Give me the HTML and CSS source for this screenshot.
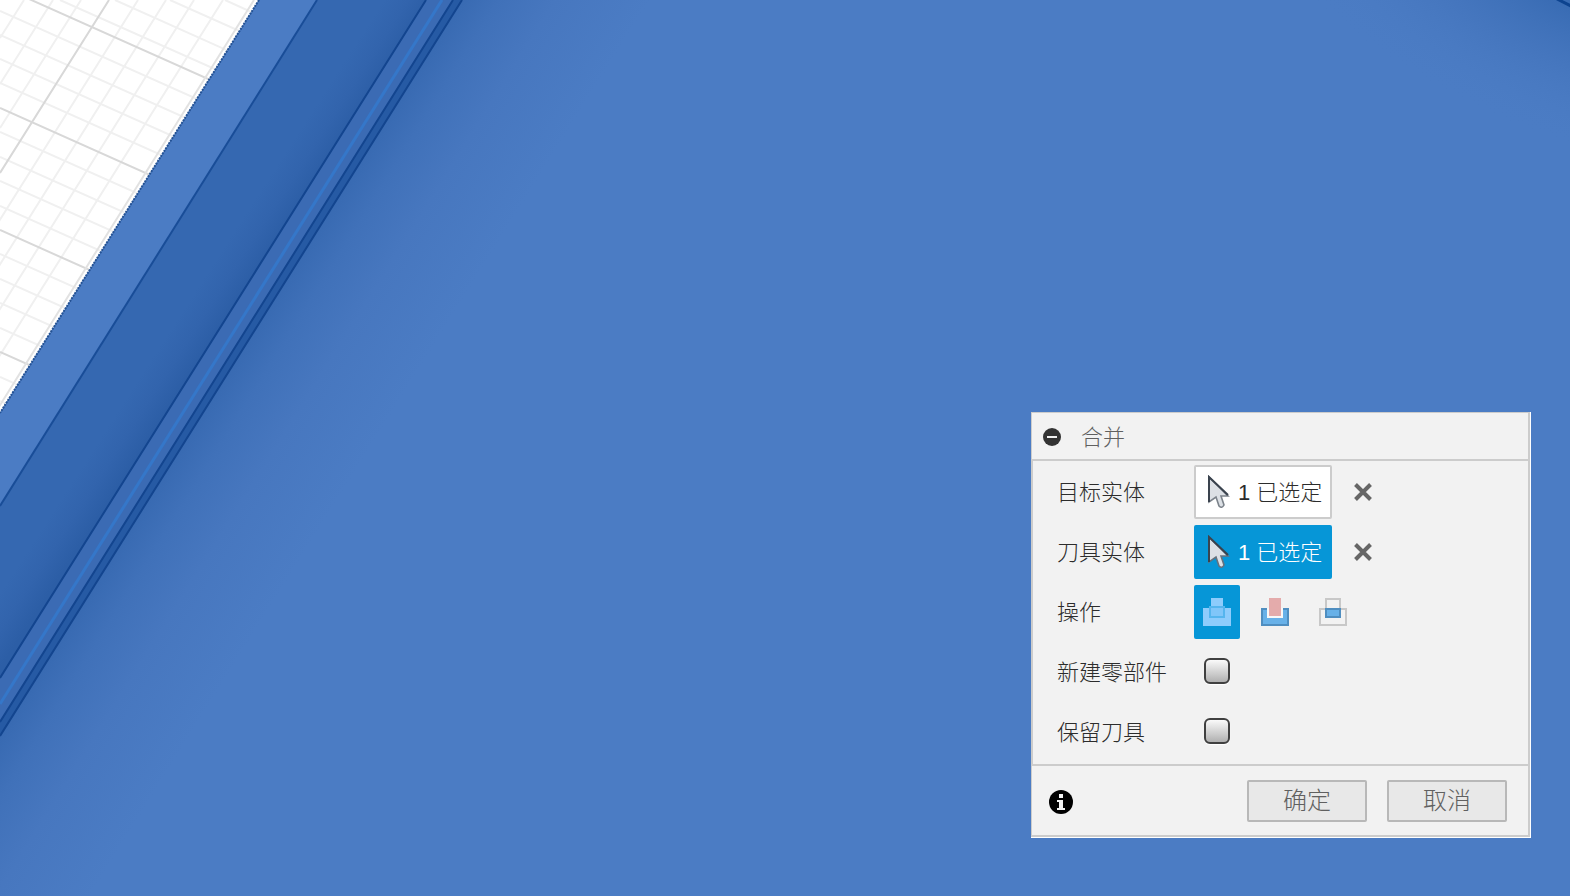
FILE: index.html
```html
<!DOCTYPE html>
<html lang="zh-CN">
<head>
<meta charset="utf-8">
<title>合并</title>
<link rel="stylesheet" href="styles.css">
</head>
<body>
<main class="viewport">
  <svg class="scene" viewBox="0 0 1570 896" preserveAspectRatio="xMinYMin slice" aria-hidden="true">
    <defs>
      <linearGradient id="floor" gradientUnits="userSpaceOnUse" x1="231" y1="368" x2="367" y2="453">
        <stop offset="0" stop-color="#386ab2"/>
        <stop offset=".2" stop-color="#4071b9"/>
        <stop offset=".5" stop-color="#4777bf"/>
        <stop offset="1" stop-color="#4b7cc4"/>
      </linearGradient>
      <linearGradient id="crease" gradientUnits="userSpaceOnUse" x1="179" y1="317" x2="213" y2="339">
        <stop offset="0" stop-color="#3568b1"/>
        <stop offset=".5" stop-color="#3264ad"/>
        <stop offset="1" stop-color="#2c5ea6"/>
      </linearGradient>
      <radialGradient id="corner" gradientUnits="userSpaceOnUse" cx="0" cy="0" r="1" gradientTransform="translate(1580 -10) rotate(22) scale(360 150)">
        <stop offset="0" stop-color="#2d62aa" stop-opacity=".8"/>
        <stop offset=".5" stop-color="#3f70b8" stop-opacity=".5"/>
        <stop offset="1" stop-color="#4b7cc4" stop-opacity="0"/>
      </radialGradient>
      <clipPath id="plane"><path d="M0 0H259L0 413Z"/></clipPath>
    </defs>
    <rect width="1570" height="896" fill="url(#floor)"/>
    <rect x="1100" width="470" height="300" fill="url(#corner)"/>
    <path d="M1557 -1L1571 6" stroke="#0d438f" stroke-width="3"/>
    <path d="M0 0H259L0 413Z" fill="#fff"/>
    <g clip-path="url(#plane)" fill="none">
      <path stroke="#f0f0f0" stroke-width="2" d="M0 11L300 145M0 35L300 169M0 59L300 193M0 83L300 217M0 132L300 266M0 157L300 291M0 181L300 315M0 206L300 340M0 254L300 388M0 279L300 413M0 303L300 437M0 328L300 462M0 377L300 511M0 401L300 535M60 0L300 107M115 0L300 83M170 0L300 58M225 0L300 34"/>
      <path stroke="#f0f0f0" stroke-width="2" d="M24 0L0 38M53 0L0 84M81 0L0 128M138 0L-122 414M166 0L-94 414M194 0L-66 414M223 0L-37 414"/>
      <path stroke="#d8d8d8" stroke-width="2" d="M0 -14L300 120M0 108L300 242M0 230L300 364M0 352L300 486M109 0L0 173"/>
      <path stroke="#e2e2e2" stroke-width="2" d="M254 0L-5 413"/>
    </g>
    <path d="M259 0H317L0 506V413Z" fill="#4b7cc4"/>
    <path d="M317 0H426L0 678V506Z" fill="#3568b1"/>
    <path d="M372 0H426L0 678V592Z" fill="url(#crease)"/>
    <path d="M426 0H453L0 722V678Z" fill="#3b6bb4"/>
    <path d="M453 0H462L0 736V722Z" fill="#265aa4"/>
    <g fill="none" stroke-width="2">
      <path stroke="#245294" stroke-dasharray="2 1" d="M259 0L0 413"/>
      <path stroke="#194d98" d="M317 0L0 506"/>
      <path stroke="#13458f" d="M426 0L0 678M453 0L0 722M462 0L0 736"/>
      <path stroke="#3577c9" stroke-width="3" d="M442 0L0 704"/>
    </g>
  </svg>

  <form class="dialog" aria-labelledby="dialog-title">
    <header class="dialog-header">
      <button class="plain-button" type="button" aria-label="折叠">
        <svg width="18" height="18" viewBox="0 0 18 18"><circle cx="9" cy="9" r="9" fill="#333"/><path d="M4 9H14" stroke="#f1f1f1" stroke-width="2"/></svg>
      </button>
      <h1 class="dialog-title" id="dialog-title">合并</h1>
    </header>

    <div class="dialog-body">
      <div class="row">
        <span class="row-label" id="target-label">目标实体</span>
        <button class="picker" type="button" aria-describedby="target-label">
          <svg class="cursor" width="22" height="34" viewBox="0 0 22 34"><path d="M1 2V27L8 22L11 31Q14 34 16 30L13 21H20Z" fill="#dce0e5" stroke="#7c838b" stroke-width="1.6"/><path d="M1 27V2L20 20" fill="none" stroke="#3a434e" stroke-width="2"/></svg>
          <span>1 已选定</span>
        </button>
        <button class="plain-button clear" type="button" aria-label="清除目标实体">
          <svg width="18" height="18" viewBox="0 0 18 18"><path d="M1.500 1.500L16.500 16.500M16.500 1.500L1.500 16.500" stroke="#666" stroke-width="4"/></svg>
        </button>
      </div>
      <div class="row">
        <span class="row-label" id="tool-label">刀具实体</span>
        <button class="picker picker-active" type="button" aria-describedby="tool-label">
          <svg class="cursor" width="22" height="34" viewBox="0 0 22 34"><path d="M1 2V27L8 22L11 31Q14 34 16 30L13 21H20Z" fill="#dce0e5" stroke="#66717d" stroke-width="1.6"/><path d="M1 27V2L20 20" fill="none" stroke="#3a434e" stroke-width="2"/></svg>
          <span>1 已选定</span>
        </button>
        <button class="plain-button clear" type="button" aria-label="清除刀具实体">
          <svg width="18" height="18" viewBox="0 0 18 18"><path d="M1.500 1.500L16.500 16.500M16.500 1.500L1.500 16.500" stroke="#666" stroke-width="4"/></svg>
        </button>
      </div>
      <div class="row">
        <span class="row-label" id="operation-label">操作</span>
        <div class="operations" role="group" aria-labelledby="operation-label">
          <button class="operation operation-active" type="button" aria-label="合并" aria-pressed="true">
            <svg width="28" height="28" viewBox="0 0 28 28"><path d="M8 0H20V10H28V28H0V10H8Z" fill="#8dccfc"/><rect x="7" y="9" width="14" height="10" fill="#80c6f9" stroke="#55b5ee" stroke-width="2"/></svg>
          </button>
          <button class="operation" type="button" aria-label="剪切" aria-pressed="false">
            <svg width="28" height="28" viewBox="0 0 28 28"><rect x="1" y="11" width="26" height="16" fill="#68b1e8" stroke="#4f8ec0" stroke-width="2"/><path d="M6 10H22V20H6Z" fill="#f8f8f8"/><path d="M8 0H20V18H8Z" fill="#e4abab"/></svg>
          </button>
          <button class="operation" type="button" aria-label="相交" aria-pressed="false">
            <svg width="28" height="28" viewBox="0 0 28 28"><g fill="none" stroke-width="2"><path d="M1 11H27V27H1ZM7 1H21V19H7Z" stroke="#c8c8c8"/><rect x="7" y="11" width="14" height="8" fill="#68b1e8" stroke="#4f8ec0"/></g></svg>
          </button>
        </div>
      </div>
      <div class="row">
        <label class="row-label" for="new-component">新建零部件</label>
        <input class="check" type="checkbox" id="new-component">
      </div>
      <div class="row">
        <label class="row-label" for="keep-tools">保留刀具</label>
        <input class="check" type="checkbox" id="keep-tools">
      </div>
    </div>

    <footer class="dialog-footer">
      <button class="plain-button info" type="button" aria-label="信息">
        <svg width="24" height="24" viewBox="0 0 24 24"><circle cx="12" cy="12" r="12" fill="#000"/><path d="M10 4H14V8H10ZM8 10H14V18H16V20H8V18H10V12H8Z" fill="#f4f4f4"/></svg>
      </button>
      <button class="action" type="submit">确定</button>
      <button class="action" type="button">取消</button>
    </footer>
  </form>
</main>
</body>
</html>
```
FILE: styles.css
```css
* {
  box-sizing: border-box;
}

body {
  margin: 0;
  font-family: "Liberation Sans", "Noto Sans CJK SC", sans-serif;
  font-size: 22px;
  font-weight: 300;
  line-height: 30px;
  color: #2c2c2c;
}

button {
  margin: 0;
  font: inherit;
  cursor: pointer;
}

svg {
  display: block;
}

.viewport {
  position: relative;
  min-height: 100vh;
  overflow: hidden;
  background: #4b7cc4;
}

.scene {
  position: absolute;
  inset: 0;
  width: 100%;
  height: 100%;
}

.dialog {
  position: absolute;
  right: 39px;
  bottom: 58px;
  width: 500px;
  border-right: 1px solid #fff;
  border-bottom: 1px solid #fff;
  background: #f2f2f2;
}

.dialog-header {
  display: flex;
  align-items: center;
  gap: 20px;
  height: 49px;
  padding: 1px 11px 0;
  border: 1px solid #ccc;
  border-width: 1px 2px 2px 1px;
}

.dialog-title {
  margin: 0;
  padding-top: 2px;
  font-size: 22px;
  font-weight: 300;
  color: #606060;
}

.plain-button {
  display: flex;
  padding: 0;
  border: 0;
  background: none;
}

.dialog-body {
  display: flex;
  flex-direction: column;
  gap: 6px;
  padding: 4px 24px 5px;
  border: solid #ccc;
  border-width: 0 2px;
}

.row {
  display: flex;
  align-items: center;
  height: 54px;
}

.row-label {
  width: 137px;
  flex: none;
  padding-top: 2px;
}

.picker {
  display: flex;
  align-items: center;
  gap: 8px;
  width: 138px;
  height: 54px;
  padding: 0 0 0 12px;
  border: 2px solid #ccc;
  border-radius: 2px;
  background: #fff;
  color: #2c2c2c;
  white-space: nowrap;
}

.picker span {
  padding-top: 2px;
}

.picker-active {
  border-color: #0696d7;
  background: #0696d7;
  color: #fff;
}

.clear {
  margin-left: 22px;
}

.operations {
  display: flex;
  gap: 12px;
}

.operation {
  display: flex;
  align-items: center;
  justify-content: center;
  width: 46px;
  height: 54px;
  padding: 0;
  border: 0;
  border-radius: 2px;
  background: none;
}

.operation-active {
  background: #0696d7;
}

.check {
  appearance: none;
  width: 26px;
  height: 26px;
  margin: 0 10px 2px;
  border: 2px solid #404040;
  border-radius: 6px;
  background: linear-gradient(#fafafa, #b0b0b0);
  box-shadow: 0 1px 1px #fff;
}

.dialog-footer {
  display: flex;
  align-items: center;
  gap: 20px;
  height: 73px;
  padding: 0 21px 0 17px;
  border: 2px solid #ccc;
  border-left-width: 1px;
}

.info {
  margin-right: auto;
  padding-top: 2px;
}

.action {
  width: 120px;
  height: 42px;
  padding: 0;
  border: 2px solid #b8b8b8;
  border-radius: 2px;
  background: #e8e8e8;
  color: #606060;
  font-size: 24px;
}
```
